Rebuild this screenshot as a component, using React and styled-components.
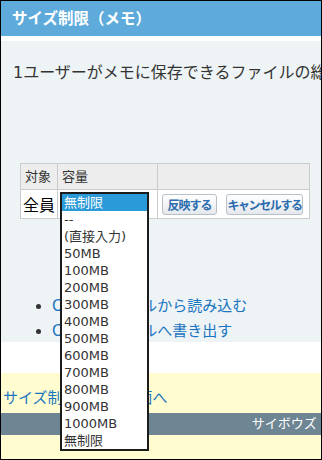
import React from "react";
import styled, { createGlobalStyle } from "styled-components";

const GlobalStyle = createGlobalStyle`
  html, body { margin: 0; padding: 0; overflow: hidden; background: #fff; }
  body { font-family: "DejaVu Sans", "Noto Sans CJK JP", sans-serif; color: #333; }
  * { box-sizing: border-box; }
`;

const Frame = styled.div`
  width: 322px;
  height: 460px;
  border: 1px solid #000;
  overflow: hidden;
`;

const Page = styled.div`
  width: 440px;
  height: 100%;
  display: flex;
  flex-direction: column;
  background: #fff;
`;

const TitleBar = styled.h1`
  margin: 0;
  height: 35px;
  line-height: 34px;
  padding: 1px 0 0 11px;
  background: #5eabdb;
  color: #fff;
  font-size: 15.5px;
  font-weight: bold;
  white-space: nowrap;
`;

const Content = styled.section`
  margin-top: 5px;
  background: #eef3f6;
  padding: 20px 12px 0;
`;

const Lead = styled.p`
  margin: 0;
  font-size: 16px;
  line-height: 24px;
  white-space: nowrap;
  color: #333;
`;

const SettingTable = styled.table`
  margin: 78px 0 0 7px;
  border-collapse: collapse;
  table-layout: fixed;
  width: 289px;
  background: #fff;
`;

const HeadCell = styled.th`
  border: 1px solid #cccccc;
  background: #ededed;
  font-size: 13px;
  font-weight: normal;
  line-height: 25px;
  padding: 0 4px;
  text-align: left;
  color: #333;
`;

const Cell = styled.td`
  position: relative;
  border: 1px solid #cccccc;
  padding: ${(p) => p.$pad || "0 2px"};
  height: 29px;
  vertical-align: middle;
  font-size: 16px;
  color: #000;
  white-space: nowrap;
`;

const ButtonRow = styled.div`
  display: flex;
  gap: 9px;
`;

const ActionButton = styled.button`
  width: ${(p) => p.$w}px;
  height: 21px;
  padding: 0;
  border: 1px solid #b7bfc7;
  border-radius: 3px;
  background: linear-gradient(#ffffff, #e4e8ec);
  color: #2b6cae;
  font-family: "Noto Sans CJK JP", sans-serif;
  font-size: 12px;
  font-weight: bold;
  letter-spacing: ${(p) => p.$ls || "-1px"};
  line-height: 19px;
  text-align: center;
  white-space: nowrap;
`;

const SelectBox = styled.div`
  width: 89px;
  height: 21px;
`;

const Popup = styled.ul`
  position: absolute;
  top: 2px;
  left: 2px;
  z-index: 10;
  width: 89px;
  margin: 0;
  padding: 0;
  list-style: none;
  background: #fff;
  border: 2px solid #1c1c1c;
`;

const PopupOption = styled.li`
  height: 17px;
  line-height: 17px;
  padding: 0 2px;
  font-size: 13px;
  white-space: nowrap;
  background: ${(p) => (p.$selected ? "#2a9bd8" : "transparent")};
  color: ${(p) => (p.$selected ? "#fff" : "#333")};
`;

const LinkList = styled.ul`
  margin: 73px 0 0;
  padding-left: 39px;
  font-size: 15px;
  color: #333;
`;

const LinkItem = styled.li`
  padding-top: 3px;
  line-height: 22px;
`;

const TextLink = styled.a`
  color: #1a75c0;
  text-decoration: none;
  white-space: nowrap;
`;

const FooterArea = styled.footer`
  margin-top: 31px;
  flex: 1;
  background: #fffdd0;
`;

const BackLine = styled.div`
  padding: 15px 2px 5px;
  font-size: 15px;
  line-height: 20px;
`;

const CopyBar = styled.div`
  height: 22px;
  line-height: 22px;
  background: #6e8593;
  color: #fff;
  font-size: 13px;
  text-align: right;
  padding-right: 55px;
  white-space: nowrap;
`;

const options = [
  "無制限",
  "--",
  "(直接入力)",
  "50MB",
  "100MB",
  "200MB",
  "300MB",
  "400MB",
  "500MB",
  "600MB",
  "700MB",
  "800MB",
  "900MB",
  "1000MB",
  "無制限",
];

export default function App() {
  return (
    <>
      <GlobalStyle />
      <Frame>
        <Page>
          <TitleBar>サイズ制限（メモ）</TitleBar>
          <Content>
            <Lead>1ユーザーがメモに保存できるファイルの総容量を設定します。</Lead>
            <SettingTable>
              <colgroup>
                <col style={{ width: 37 }} />
                <col style={{ width: 100 }} />
                <col style={{ width: 152 }} />
              </colgroup>
              <thead>
                <tr>
                  <HeadCell>対象</HeadCell>
                  <HeadCell>容量</HeadCell>
                  <HeadCell />
                </tr>
              </thead>
              <tbody>
                <tr>
                  <Cell>全員</Cell>
                  <Cell>
                    <SelectBox />
                    <Popup>
                      {options.map((o, i) => (
                        <PopupOption key={i} $selected={i === 0}>
                          {o}
                        </PopupOption>
                      ))}
                    </Popup>
                  </Cell>
                  <Cell $pad="0 4px">
                    <ButtonRow>
                      <ActionButton $w={55}>反映する</ActionButton>
                      <ActionButton $w={77} $ls="-1.4px">キャンセルする</ActionButton>
                    </ButtonRow>
                  </Cell>
                </tr>
              </tbody>
            </SettingTable>
            <LinkList>
              <LinkItem>
                <TextLink href="#">CSVのファイルから読み込む</TextLink>
              </LinkItem>
              <LinkItem>
                <TextLink href="#">CSVのファイルへ書き出す</TextLink>
              </LinkItem>
            </LinkList>
          </Content>
          <FooterArea>
            <BackLine>
              <TextLink href="#">サイズ制限設定の画面へ</TextLink>
            </BackLine>
            <CopyBar>サイボウズ © Cybozu</CopyBar>
          </FooterArea>
        </Page>
      </Frame>
    </>
  );
}
